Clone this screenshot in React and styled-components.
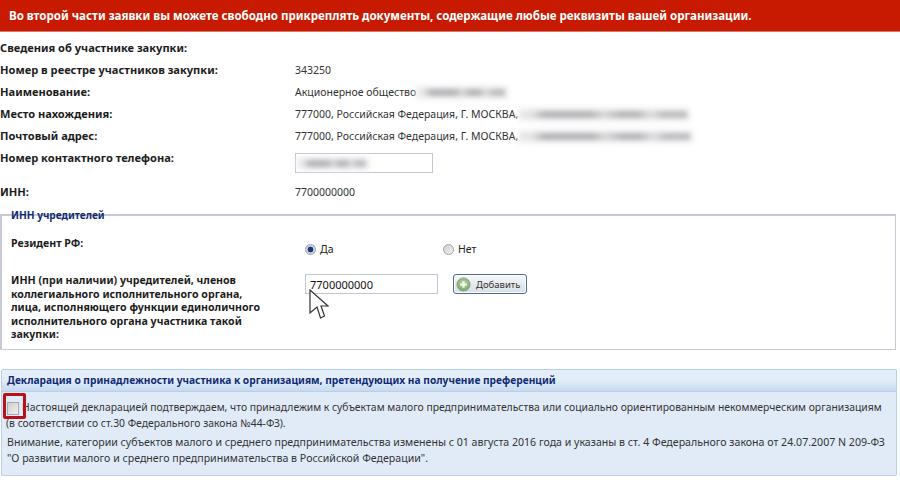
import styled, { createGlobalStyle } from "styled-components";

const Global = createGlobalStyle`
  html, body {
    margin: 0;
    padding: 0;
    background: #fff;
  }
  body {
    font-family: "Noto Sans", "DejaVu Sans", sans-serif;
    font-size: 10.5px;
    color: #222;
  }
`;

export default function App() {
  return (
    <Page>
      <Global />
      <Banner>
        Во второй части заявки вы можете свободно прикреплять документы, содержащие любые реквизиты вашей организации.
      </Banner>

      <Info>
        <Row>
          <Label>Сведения об участнике закупки:</Label>
        </Row>
        <Row>
          <Label>Номер в реестре участников закупки:</Label>
          <Value>343250</Value>
        </Row>
        <Row>
          <Label>Наименование:</Label>
          <Value>
            Акционерное общество <Smudge $w={86} />
          </Value>
        </Row>
        <Row>
          <Label>Место нахождения:</Label>
          <Value>
            777000, Российская Федерация, Г. МОСКВА, <Smudge $w={166} />
          </Value>
        </Row>
        <Row>
          <Label>Почтовый адрес:</Label>
          <Value>
            777000, Российская Федерация, Г. МОСКВА, <Smudge $w={169} />
          </Value>
        </Row>
        <PhoneRow>
          <Label>Номер контактного телефона:</Label>
          <PhoneBox>
            <Smudge $w={66} />
          </PhoneBox>
        </PhoneRow>
        <Row>
          <Label>ИНН:</Label>
          <Value>7700000000</Value>
        </Row>
      </Info>

      <Fieldset>
        <Legend>ИНН учредителей</Legend>
        <ResidentRow>
          <FieldLabel>Резидент РФ:</FieldLabel>
          <RadioGroup>
            <RadioItem>
              <Radio $checked />
              Да
            </RadioItem>
            <RadioItem>
              <Radio />
              Нет
            </RadioItem>
          </RadioGroup>
        </ResidentRow>
        <InnRow>
          <FieldLabel>
            ИНН (при наличии) учредителей, членов
            <br />
            коллегиального исполнительного органа,
            <br />
            лица, исполняющего функции единоличного
            <br />
            исполнительного органа участника такой
            <br />
            закупки:
          </FieldLabel>
          <InnInput>
            7700000000
            <Cursor viewBox="0 0 20 31" width="20" height="31">
              <path
                d="M1 1 L1 24 L8 18 L11.5 29 L15.5 27 L12 17 L19 17 Z"
                fill="#fff"
                stroke="#333"
                strokeWidth="1.2"
              />
            </Cursor>
          </InnInput>
          <AddButton>
            <AddIcon viewBox="0 0 16 16" width="15" height="15">
              <defs>
                <radialGradient id="addFill" cx="50%" cy="40%" r="60%">
                  <stop offset="0%" stopColor="#b9dca0" />
                  <stop offset="100%" stopColor="#74a863" />
                </radialGradient>
              </defs>
              <circle cx="8" cy="8" r="7" fill="url(#addFill)" stroke="#8f9f8e" />
              <path d="M8 4.5v7M4.5 8h7" stroke="#f4f8f0" strokeWidth="2.4" />
            </AddIcon>
            Добавить
          </AddButton>
        </InnRow>
      </Fieldset>

      <Panel>
        <PanelHeader>
          Декларация о принадлежности участника к организациям, претендующих на получение преференций
        </PanelHeader>
        <PanelBody>
          <Declaration>
            <CheckMark>
              <CheckBox />
            </CheckMark>
            Настоящей декларацией подтверждаем, что принадлежим к субъектам малого предпринимательства или социально ориентированным некоммерческим организациям
            <br />
            (в соответствии со ст.30 Федерального закона №44-ФЗ).
          </Declaration>
          <Notice>
            Внимание, категории субъектов малого и среднего предпринимательства изменены с 01 августа 2016 года и указаны в ст. 4 Федерального закона от 24.07.2007 N 209-ФЗ
            <br />
            "О развитии малого и среднего предпринимательства в Российской Федерации".
          </Notice>
        </PanelBody>
      </Panel>
    </Page>
  );
}

const Page = styled.div`
  width: 900px;
  height: 480px;
  overflow: hidden;
`;

const Banner = styled.div`
  height: 31px;
  line-height: 31px;
  padding-left: 9px;
  background: #c81a00;
  border-bottom: 1px solid #d9786a;
  color: #fff;
  font-weight: 700;
  font-size: 11.55px;
  white-space: nowrap;
`;

const Info = styled.div`
  display: flex;
  flex-direction: column;
  padding-top: 5px;
`;

const Row = styled.div`
  display: grid;
  grid-template-columns: 295px 1fr;
  height: 22px;
  line-height: 22px;
  align-items: center;
`;

const PhoneRow = styled(Row)`
  height: 34px;
  align-items: start;
`;

const Label = styled.div`
  font-weight: 700;
  font-size: 11.1px;
  color: #1c1c1c;
  white-space: nowrap;
`;

const Value = styled.div`
  color: #333;
  white-space: nowrap;
  display: flex;
  align-items: center;
  gap: 3px;
`;

const Smudge = styled.span`
  display: inline-block;
  width: ${(p) => p.$w}px;
  height: 7px;
  background: linear-gradient(
    90deg,
    #e4e4e6 0 6%,
    #b2b2b6 14% 42%,
    #d8d8da 50%,
    #b4b4b8 60% 70%,
    #dedee0 78%,
    #bcbcc0 86%
  );
  box-shadow: 0 0 4px 3px #eeeeef;
  filter: blur(2.5px);
`;

const PhoneBox = styled.div`
  width: 138px;
  height: 20px;
  margin-top: 6px;
  box-sizing: border-box;
  border: 1px solid #c3c6d6;
  padding-left: 4px;
  display: flex;
  align-items: center;
`;

const Fieldset = styled.div`
  position: relative;
  width: 896px;
  height: 136px;
  margin-top: 11px;
  box-sizing: border-box;
  border: 1px solid #c8cad8;
  border-left-width: 2px;
  border-top-width: 2px;
  padding: 21px 0 0 9px;
`;

const Legend = styled.div`
  position: absolute;
  top: -8px;
  left: 9px;
  color: #102a75;
  background: linear-gradient(#fff 0 40%, transparent 40% 60%, #fff 60%);
  font-weight: 700;
  font-size: 10.1px;
  line-height: 14px;
`;

const ResidentRow = styled.div`
  display: grid;
  grid-template-columns: 294px 1fr;
  height: 37px;
`;

const InnRow = styled.div`
  display: grid;
  grid-template-columns: 294px 148px auto;
  align-items: start;
`;

const FieldLabel = styled.div`
  font-weight: 700;
  font-size: 10.6px;
  line-height: 13.5px;
  color: #1c1c1c;
  white-space: nowrap;
`;

const RadioGroup = styled.div`
  display: grid;
  grid-template-columns: 138px auto;
  padding-top: 4px;
`;

const RadioItem = styled.label`
  display: flex;
  align-items: center;
  gap: 4px;
  height: 16px;
  color: #222;
`;

const Radio = styled.span`
  width: 11px;
  height: 11px;
  border-radius: 50%;
  box-sizing: border-box;
  border: 1px solid #a2a2a8;
  background: ${(p) =>
    p.$checked
      ? "radial-gradient(circle, #1c3674 0 2.6px, #cfd4e6 3.2px)"
      : "linear-gradient(135deg, #cdcdcd, #f4f4f4)"};
`;

const InnInput = styled.div`
  position: relative;
  width: 133px;
  height: 20px;
  line-height: 20px;
  box-sizing: border-box;
  border: 1px solid #c3c6d6;
  padding-left: 4px;
  font-size: 11px;
  color: #111;
`;

const Cursor = styled.svg`
  position: absolute;
  left: 3px;
  top: 14px;
`;

const AddButton = styled.button`
  display: flex;
  align-items: center;
  gap: 5px;
  width: 74px;
  height: 20px;
  padding: 0 0 0 2px;
  margin: 0;
  box-sizing: border-box;
  border: 1px solid #4d6a9c;
  border-radius: 3px;
  background: linear-gradient(#f6f7f8, #d9dfe6);
  box-shadow: inset 0 0 0 1px #fff;
  color: #333;
  font-family: inherit;
  font-size: 9.5px;
  white-space: nowrap;
`;

const AddIcon = styled.svg`
  flex: none;
`;

const Panel = styled.div`
  width: 896px;
  height: 107px;
  margin: 19px 0 0 1px;
  box-sizing: border-box;
  border: 1px solid #b8d0e8;
  border-radius: 2px;
  background: #e1ebf7;
`;

const PanelHeader = styled.div`
  height: 21px;
  line-height: 21px;
  padding-left: 5px;
  background: linear-gradient(#e4eef9 45%, #c6daf0);
  border-bottom: 1px solid #b8d0e8;
  color: #102a75;
  font-weight: 700;
  font-size: 10.2px;
  white-space: nowrap;
`;

const PanelBody = styled.div`
  padding: 7px 5px 0 4px;
  color: #333;
`;

const Declaration = styled.div`
  position: relative;
  font-size: 10.35px;
  line-height: 16px;
  white-space: nowrap;
  text-indent: 16px;
`;

const CheckMark = styled.span`
  position: absolute;
  left: -3px;
  top: -6px;
  width: 23px;
  height: 26px;
  box-sizing: border-box;
  border: 3px solid #b5121b;
  border-radius: 2px;
  display: flex;
  align-items: center;
  justify-content: flex-start;
  padding: 4px 0 0 1px;
`;

const CheckBox = styled.span`
  width: 12px;
  height: 13px;
  box-sizing: border-box;
  border: 1px solid #a8a8b0;
  background: linear-gradient(135deg, #cfcfcf, #f0f0f0);
`;

const Notice = styled.div`
  margin-top: 3px;
  padding-left: 1px;
  font-size: 10.6px;
  line-height: 16px;
  white-space: nowrap;
`;
